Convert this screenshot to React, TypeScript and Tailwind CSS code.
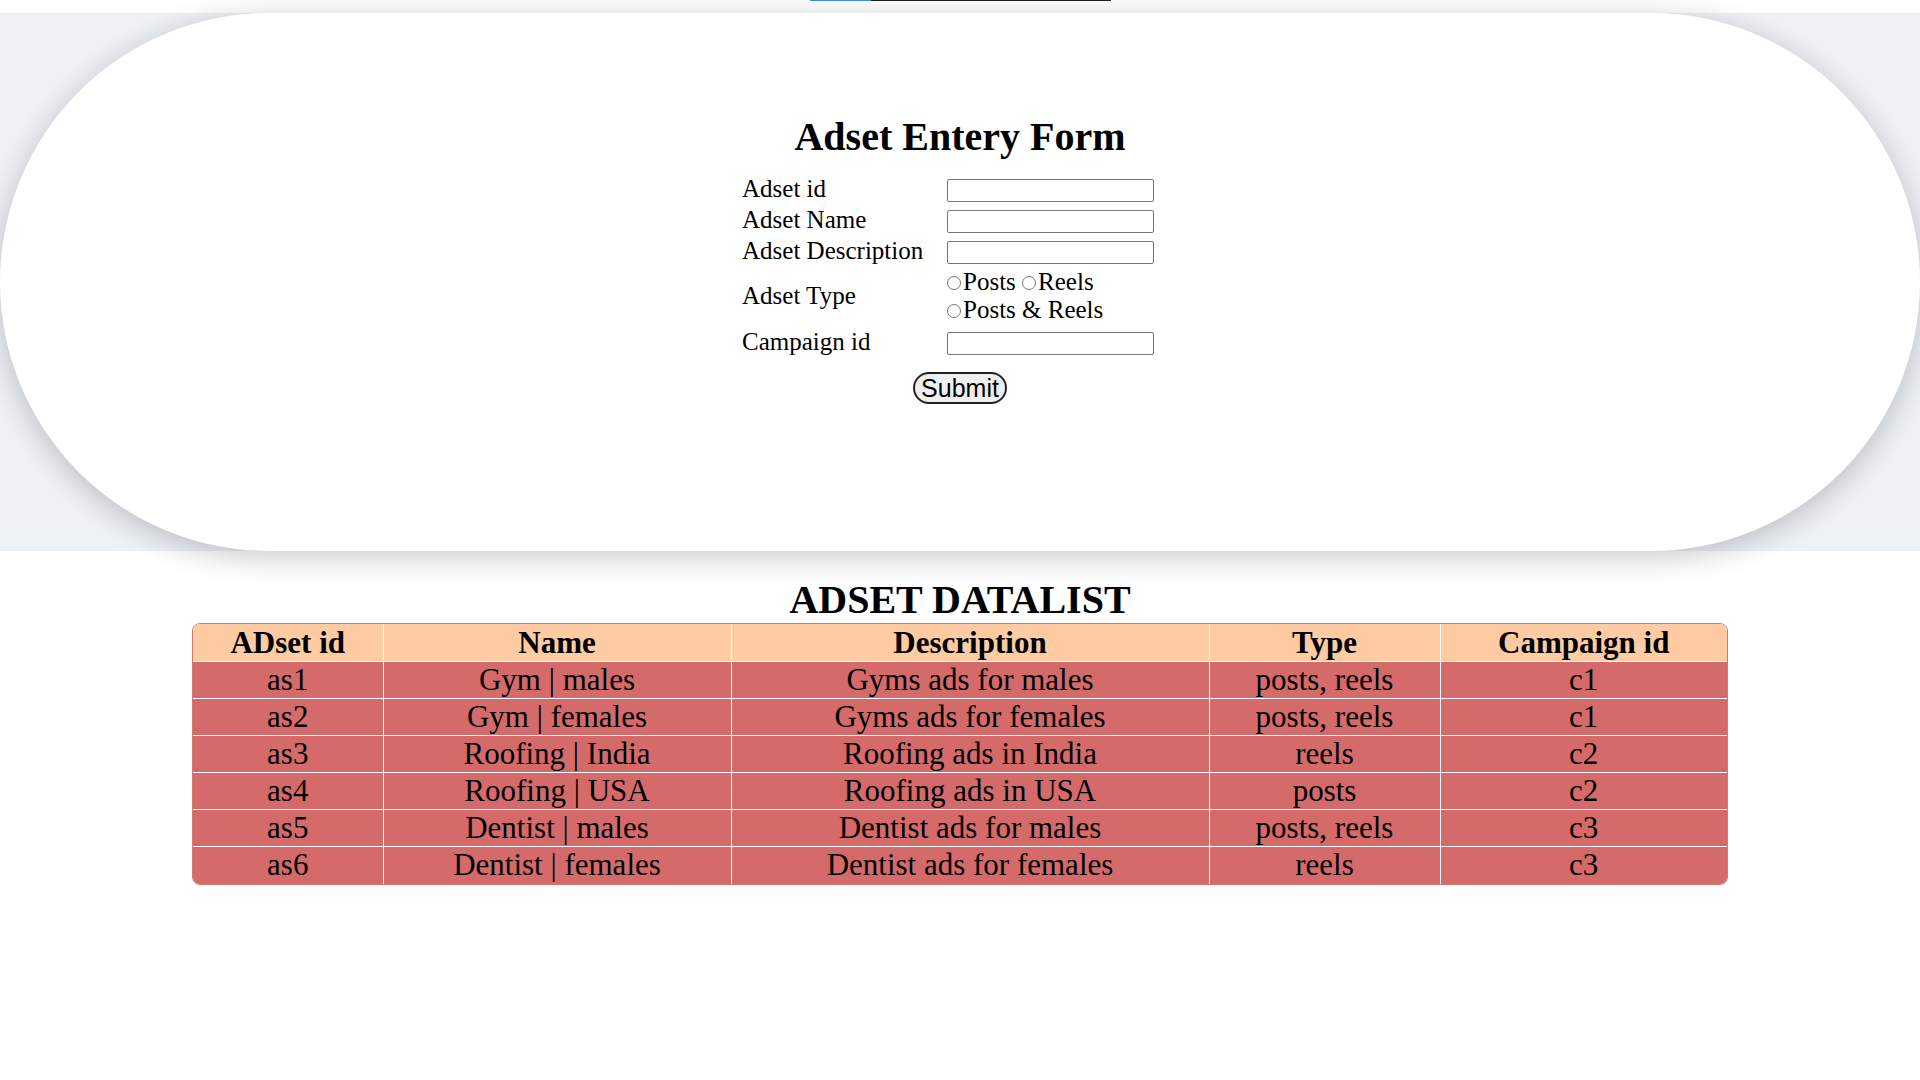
import React from "react";

const rows: string[][] = [
  ["as1", "Gym | males", "Gyms ads for males", "posts, reels", "c1"],
  ["as2", "Gym | females", "Gyms ads for females", "posts, reels", "c1"],
  ["as3", "Roofing | India", "Roofing ads in India", "reels", "c2"],
  ["as4", "Roofing | USA", "Roofing ads in USA", "posts", "c2"],
  ["as5", "Dentist | males", "Dentist ads for males", "posts, reels", "c3"],
  ["as6", "Dentist | females", "Dentist ads for females", "reels", "c3"],
];

const headers = ["ADset id", "Name", "Description", "Type", "Campaign id"];

function Radio() {
  return (
    <span className="mr-[2px] inline-block h-[14px] w-[14px] rounded-full border border-[#767676] bg-white align-baseline" />
  );
}

function TextInput() {
  return (
    <input
      type="text"
      className="h-[23px] w-[207px] rounded-[2px] border border-[#767676] bg-white px-1 outline-none"
    />
  );
}

export default function App() {
  return (
    <div className="min-h-screen bg-white font-['Liberation_Serif',serif] text-black">
      <div className="flex justify-center">
        <div className="flex h-px w-[301px]">
          <div className="w-[61px] bg-[#3b8fd3]" />
          <div className="flex-1 bg-[#1f1f1f]" />
        </div>
      </div>

      <div className="mt-[12px] h-[538px] bg-[#eef1f6]">
        <div className="flex h-full flex-col items-center rounded-full bg-white pt-[101px] shadow-[0_6px_30px_rgba(0,0,0,0.22)]">
          <h1 className="text-[40px] font-bold leading-[46px]">Adset Entery Form</h1>
          <form className="mt-[15px] flex flex-col items-center" onSubmit={(e) => e.preventDefault()}>
            <div className="grid w-[436px] grid-cols-[205px_231px] text-[25px] leading-[28px]">
              <div className="flex h-[31px] items-center pb-[4px]">Adset id</div>
              <div className="flex h-[31px] items-center"><TextInput /></div>

              <div className="flex h-[31px] items-center pb-[4px]">Adset Name</div>
              <div className="flex h-[31px] items-center"><TextInput /></div>

              <div className="flex h-[31px] items-center pb-[4px]">Adset Description</div>
              <div className="flex h-[31px] items-center"><TextInput /></div>

              <div className="flex h-[56px] items-center">Adset Type</div>
              <div className="flex h-[56px] flex-col">
                <div className="whitespace-nowrap">
                  <Radio />Posts <Radio />Reels
                </div>
                <div className="whitespace-nowrap">
                  <Radio />Posts &amp; Reels
                </div>
              </div>

              <div className="mt-[4px] flex h-[31px] items-center pb-[4px]">Campaign id</div>
              <div className="mt-[4px] flex h-[31px] items-center"><TextInput /></div>
            </div>
            <button
              type="submit"
              className="mt-[13px] rounded-full border-2 border-[#222] bg-[#efefef] px-[6px] font-['Liberation_Sans',Arial,sans-serif] text-[25px] leading-[28px] text-black"
            >
              Submit
            </button>
          </form>
        </div>
      </div>

      <div className="mt-[26px] flex flex-col items-center">
        <h2 className="text-[40px] font-bold leading-[45px]">ADSET DATALIST</h2>
        <div className="mt-px w-[1536px] overflow-hidden rounded-lg border border-[#d27a68]">
          <table className="w-full table-fixed border-collapse text-center text-[31px] leading-[36px]">
            <colgroup>
              <col className="w-[190px]" />
              <col className="w-[348px]" />
              <col className="w-[478px]" />
              <col className="w-[231px]" />
              <col />
            </colgroup>
            <thead>
              <tr className="bg-[#fecba2]">
                {headers.map((h, i) => (
                  <th
                    key={h}
                    className={
                      i === 0
                        ? "h-[37px] p-0 pt-px font-bold"
                        : "h-[37px] border-l border-white p-0 pt-px font-bold"
                    }
                  >
                    {h}
                  </th>
                ))}
              </tr>
            </thead>
            <tbody>
              {rows.map((r) => (
                <tr key={r[0]} className="bg-[#d46a6a]">
                  {r.map((c, i) => (
                    <td
                      key={i}
                      className={
                        i === 0
                          ? "h-[37px] border-t border-white p-0"
                          : "h-[37px] border-l border-t border-white p-0"
                      }
                    >
                      {c}
                    </td>
                  ))}
                </tr>
              ))}
            </tbody>
          </table>
        </div>
      </div>
    </div>
  );
}
